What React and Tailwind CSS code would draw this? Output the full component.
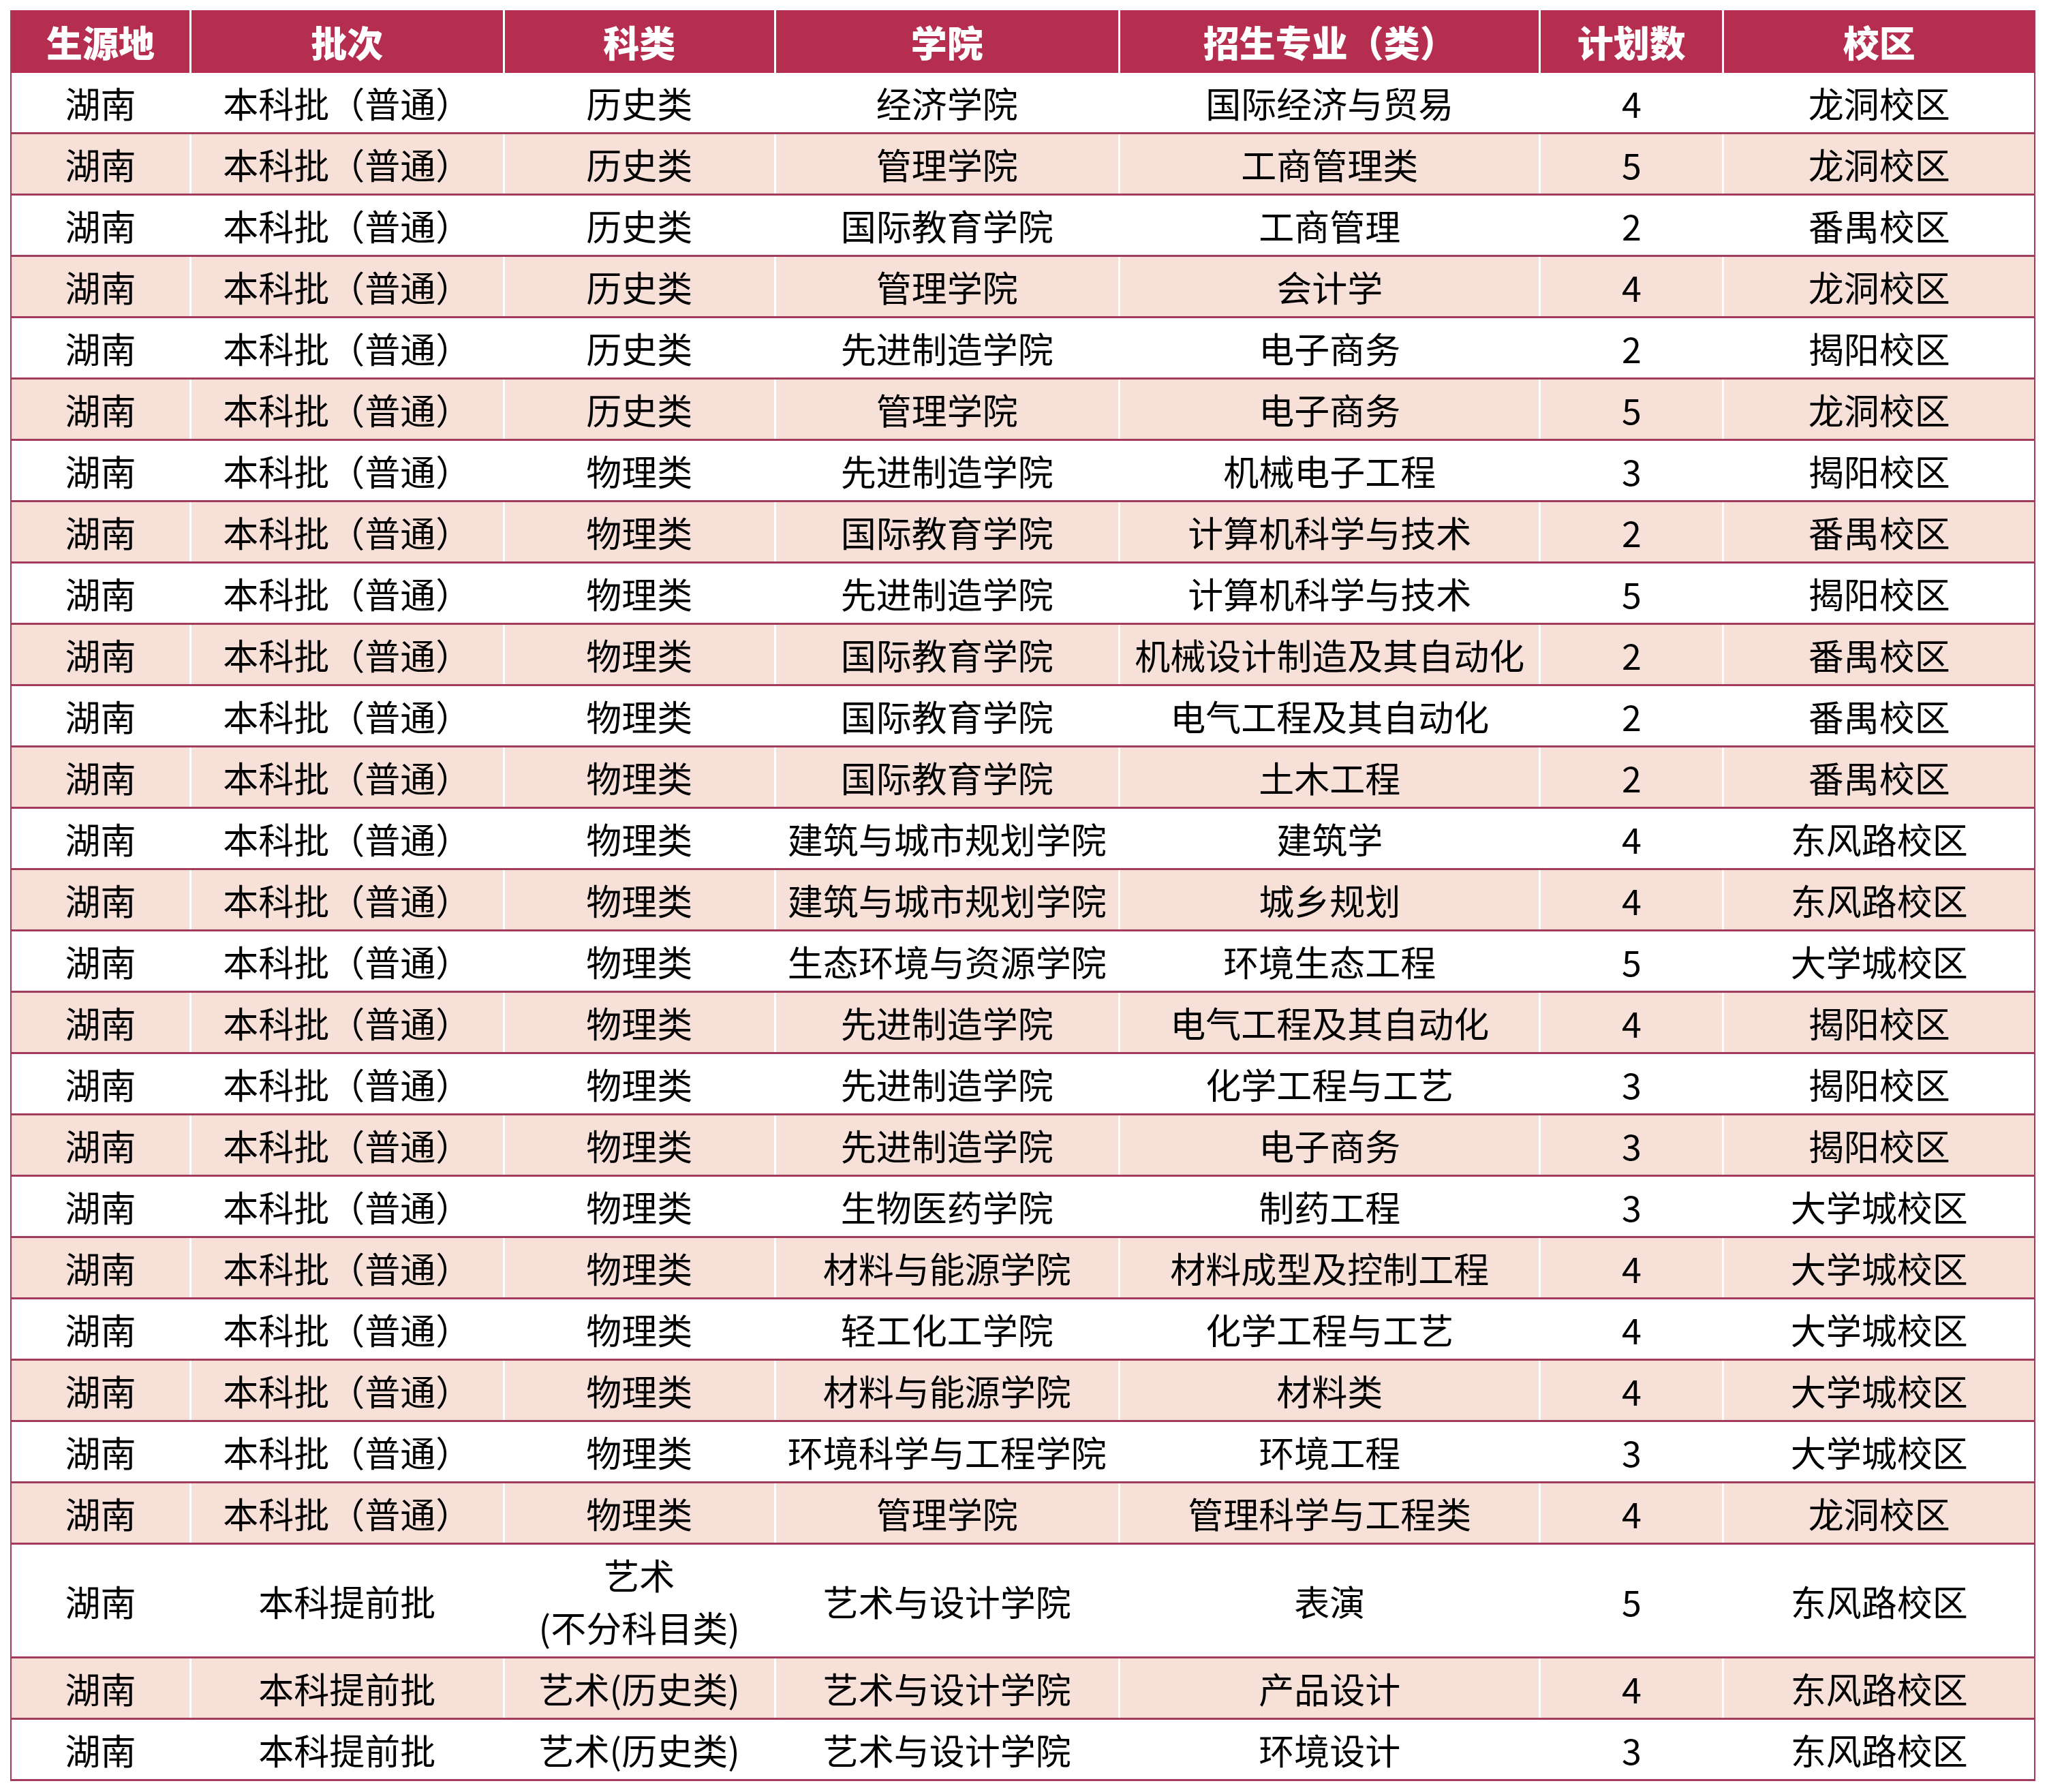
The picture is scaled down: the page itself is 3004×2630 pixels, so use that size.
import React from "react";

const rows = [
  ["湖南", "本科批（普通）", "历史类", "经济学院", "国际经济与贸易", "4", "龙洞校区"],
  ["湖南", "本科批（普通）", "历史类", "管理学院", "工商管理类", "5", "龙洞校区"],
  ["湖南", "本科批（普通）", "历史类", "国际教育学院", "工商管理", "2", "番禺校区"],
  ["湖南", "本科批（普通）", "历史类", "管理学院", "会计学", "4", "龙洞校区"],
  ["湖南", "本科批（普通）", "历史类", "先进制造学院", "电子商务", "2", "揭阳校区"],
  ["湖南", "本科批（普通）", "历史类", "管理学院", "电子商务", "5", "龙洞校区"],
  ["湖南", "本科批（普通）", "物理类", "先进制造学院", "机械电子工程", "3", "揭阳校区"],
  ["湖南", "本科批（普通）", "物理类", "国际教育学院", "计算机科学与技术", "2", "番禺校区"],
  ["湖南", "本科批（普通）", "物理类", "先进制造学院", "计算机科学与技术", "5", "揭阳校区"],
  ["湖南", "本科批（普通）", "物理类", "国际教育学院", "机械设计制造及其自动化", "2", "番禺校区"],
  ["湖南", "本科批（普通）", "物理类", "国际教育学院", "电气工程及其自动化", "2", "番禺校区"],
  ["湖南", "本科批（普通）", "物理类", "国际教育学院", "土木工程", "2", "番禺校区"],
  ["湖南", "本科批（普通）", "物理类", "建筑与城市规划学院", "建筑学", "4", "东风路校区"],
  ["湖南", "本科批（普通）", "物理类", "建筑与城市规划学院", "城乡规划", "4", "东风路校区"],
  ["湖南", "本科批（普通）", "物理类", "生态环境与资源学院", "环境生态工程", "5", "大学城校区"],
  ["湖南", "本科批（普通）", "物理类", "先进制造学院", "电气工程及其自动化", "4", "揭阳校区"],
  ["湖南", "本科批（普通）", "物理类", "先进制造学院", "化学工程与工艺", "3", "揭阳校区"],
  ["湖南", "本科批（普通）", "物理类", "先进制造学院", "电子商务", "3", "揭阳校区"],
  ["湖南", "本科批（普通）", "物理类", "生物医药学院", "制药工程", "3", "大学城校区"],
  ["湖南", "本科批（普通）", "物理类", "材料与能源学院", "材料成型及控制工程", "4", "大学城校区"],
  ["湖南", "本科批（普通）", "物理类", "轻工化工学院", "化学工程与工艺", "4", "大学城校区"],
  ["湖南", "本科批（普通）", "物理类", "材料与能源学院", "材料类", "4", "大学城校区"],
  ["湖南", "本科批（普通）", "物理类", "环境科学与工程学院", "环境工程", "3", "大学城校区"],
  ["湖南", "本科批（普通）", "物理类", "管理学院", "管理科学与工程类", "4", "龙洞校区"],
  ["湖南", "本科提前批", "艺术\n(不分科目类)", "艺术与设计学院", "表演", "5", "东风路校区"],
  ["湖南", "本科提前批", "艺术(历史类)", "艺术与设计学院", "产品设计", "4", "东风路校区"],
  ["湖南", "本科提前批", "艺术(历史类)", "艺术与设计学院", "环境设计", "3", "东风路校区"],
];

const headers = ["生源地", "批次", "科类", "学院", "招生专业（类）", "计划数", "校区"];

const gridCols =
  "grid grid-cols-[263fr_460fr_398fr_506fr_619fr_268fr_458fr] gap-x-[3px]";

export default function App() {
  return (
    <div
      className="bg-white w-[3004px] h-[2630px] pt-[15px] pl-[15px]"
      style={{ fontFamily: '"Noto Sans CJK SC", "Microsoft YaHei", sans-serif' }}
    >
      <div className="w-[2972px] border-x-2 border-[#a33c5c] bg-white">
        <div className={`${gridCols} h-[92px]`}>
          {headers.map((h, i) => (
            <div
              key={i}
              className="bg-[#b52d4f] text-white font-black text-[53px] flex items-center justify-center leading-none"
            >
              {h}
            </div>
          ))}
        </div>
        {rows.map((r, ri) => {
          const tall = r[2].includes("\n");
          const pink = ri % 2 === 1;
          return (
            <div
              key={ri}
              className={`${gridCols} border-b-[3px] border-[#a33c5c] ${
                tall ? "h-[167px]" : "h-[90px]"
              }`}
            >
              {r.map((c, ci) => (
                <div
                  key={ci}
                  className={`${
                    pink ? "bg-[#f7e0d8]" : "bg-white"
                  } text-black text-[52px] flex flex-col items-center justify-center text-center whitespace-nowrap leading-[77px]`}
                >
                  {c.split("\n").map((line, li) => (
                    <span key={li}>{line}</span>
                  ))}
                </div>
              ))}
            </div>
          );
        })}
      </div>
    </div>
  );
}
